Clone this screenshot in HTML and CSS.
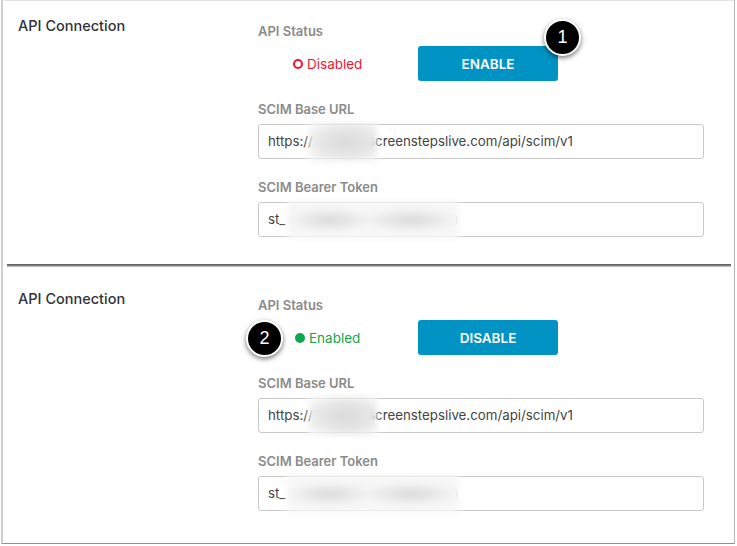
FILE: index.html
```html
<!DOCTYPE html>
<html lang="en">
<head>
    <meta charset="UTF-8">
    <meta name="viewport" content="width=device-width, initial-scale=1.0">
    <title>API Connection</title>
    <link rel="stylesheet" href="styles.css">
</head>
<body>
    <div class="frame">
        <section class="panel">
            <h3 class="panel-title">API Connection</h3>
            <div class="fields">
                <div class="field-label">API Status</div>
                <div class="status-row">
                    <div class="status status-off"><span class="dot dot-off"></span>Disabled</div>
                    <div class="btn-wrap">
                        <button class="btn">ENABLE</button>
                        <span class="callout callout-one">1</span>
                    </div>
                </div>
                <div class="field-label label-gap">SCIM Base URL</div>
                <div class="input">https:/<span class="gap-url">/</span>screenstepslive.com/api/scim/v1<span class="smudge smudge-url"></span></div>
                <div class="field-label label-gap">SCIM Bearer Token</div>
                <div class="input">st_<span class="tail">)</span><span class="smudge smudge-token"></span></div>
            </div>
        </section>
        <div class="divider"></div>
        <section class="panel panel-second">
            <h3 class="panel-title">API Connection</h3>
            <div class="fields">
                <div class="field-label">API Status</div>
                <div class="status-row">
                    <div class="status status-on">
                        <span class="callout callout-two">2</span>
                        <span class="dot dot-on"></span>Enabled
                    </div>
                    <div class="btn-wrap">
                        <button class="btn">DISABLE</button>
                    </div>
                </div>
                <div class="field-label label-gap">SCIM Base URL</div>
                <div class="input">https:/<span class="gap-url">/</span>screenstepslive.com/api/scim/v1<span class="smudge smudge-url"></span></div>
                <div class="field-label label-gap">SCIM Bearer Token</div>
                <div class="input">st_<span class="tail">)</span><span class="smudge smudge-token"></span></div>
            </div>
        </section>
    </div>
</body>
</html>
```

FILE: styles.css
```css
* {
    box-sizing: border-box;
    margin: 0;
    padding: 0;
}
body {
    background: #fff;
    font-family: "Inter", "Liberation Sans", sans-serif;
    color: #3a3a3a;
    height: 546px;
    overflow: hidden;
}
.frame {
    width: 734px;
    height: 544px;
    margin-left: 1px;
    border: 1px solid #cfcfcf;
    border-top-color: #e4e4e4;
    border-bottom-color: #8f8f8f;
    border-right-color: #b5b5b5;
    border-left-width: 2px;
}
.panel {
    display: flex;
    height: 263px;
    padding: 16px 0 0 15px;
}
.panel-second {
    height: 277px;
    padding-top: 24px;
}
.panel-title {
    width: 240px;
    font-size: 14.5px;
    font-weight: 500;
    line-height: 17px;
    color: #2f3338;
}
.panel-second .panel-title {
    margin-top: -1px;
}
.fields {
    width: 446px;
    padding-top: 6px;
}
.field-label {
    font-size: 13px;
    font-weight: 600;
    line-height: 16px;
    color: #8b8b8b;
}
.label-gap {
    margin-top: 20px;
}
.status-row {
    display: flex;
    align-items: center;
    margin-top: 7px;
    height: 35px;
}
.status {
    position: relative;
    display: flex;
    align-items: center;
    width: 160px;
    padding-left: 35px;
    font-size: 13.5px;
}
.status-off {
    color: #f0142f;
}
.status-on {
    padding-left: 37px;
    color: #14a54e;
}
.dot {
    width: 10px;
    height: 10px;
    margin-right: 4px;
    border-radius: 50%;
}
.dot-off {
    border: 2px solid #f0142f;
}
.dot-on {
    background: #0fa94f;
}
.btn-wrap {
    position: relative;
}
.btn {
    display: block;
    width: 140px;
    height: 35px;
    border: none;
    border-radius: 3px;
    background: #0093c4;
    color: #fff;
    font-family: inherit;
    font-size: 13.5px;
    font-weight: 600;
}
.input {
    position: relative;
    height: 35px;
    margin-top: 7px;
    padding-left: 9px;
    border: 1px solid #c9c9c9;
    border-radius: 3px;
    background: #fff;
    font-size: 13.3px;
    line-height: 33px;
    color: #444;
    white-space: nowrap;
}
.gap-url {
    display: inline-block;
    width: 60px;
}
.tail {
    margin-left: 168px;
    color: #9cc3dd;
}
.smudge {
    position: absolute;
    top: -2px;
    height: 38px;
    filter: blur(3px);
}
.smudge-url {
    left: 50px;
    width: 68px;
    background: radial-gradient(ellipse at 55% 50%, #dadada 0%, #e6e6e6 50%, #f7f7f7 90%);
}
.smudge-token {
    left: 28px;
    width: 172px;
    background:
        radial-gradient(ellipse 45px 12px at 25% 50%, #d8d8d8, transparent),
        radial-gradient(ellipse 50px 12px at 72% 50%, #d8d8d8, transparent),
        #f7f7f7;
}
.callout {
    position: absolute;
    width: 37px;
    height: 37px;
    border: 2px solid #fff;
    border-radius: 50%;
    background: #000;
    color: #fff;
    font-family: "Liberation Sans", sans-serif;
    font-size: 18px;
    line-height: 33px;
    text-align: center;
    box-shadow: 0 2px 5px rgba(0, 0, 0, 0.55);
}
.callout-one {
    top: -27px;
    right: -23px;
}
.callout-two {
    top: -10px;
    left: -12px;
}
.divider {
    height: 3px;
    margin: 0 3px 0 4px;
    background: linear-gradient(#555, #8a8a8a 60%, #ddd);
}
```
